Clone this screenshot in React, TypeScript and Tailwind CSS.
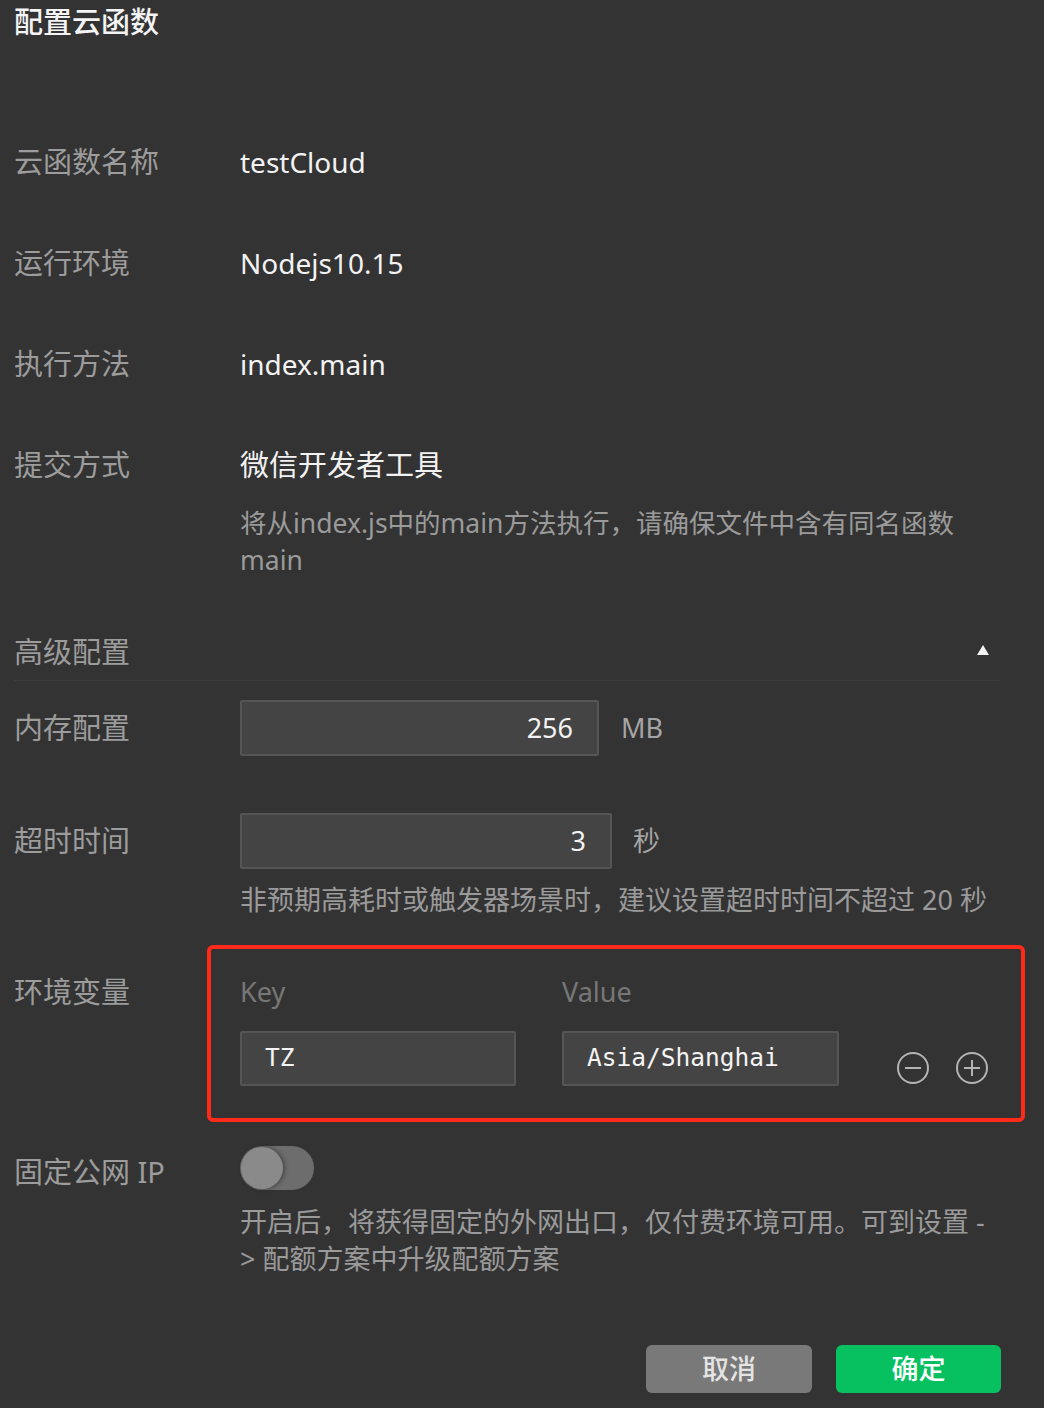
import React from 'react';

function Row({ label, children }: { label: string; children: React.ReactNode }) {
  return (
    <div className="flex items-center h-[101px]">
      <div className="w-[226px] text-[29px] text-[#9c9c9c]">{label}</div>
      <div className="text-[28px] text-[#f2f2f2]">{children}</div>
    </div>
  );
}

function CircleIcon({ plus }: { plus?: boolean }) {
  return (
    <svg width="34" height="34" viewBox="0 0 34 34" fill="none" stroke="#b4b4b4" strokeWidth="2">
      <circle cx="17" cy="17" r="15" />
      <line x1="9" y1="17" x2="25" y2="17" />
      {plus && <line x1="17" y1="9" x2="17" y2="25" />}
    </svg>
  );
}

export default function App() {
  return (
    <div className="w-[1044px] h-[1408px] bg-[#333333] pl-[14px] font-['Noto_Sans','Noto_Sans_CJK_SC',sans-serif] overflow-hidden">
      <div className="h-[44px] leading-[44px] text-[29px] font-medium text-[#f4f4f4]">配置云函数</div>
      <div className="h-[67px]" />

      <Row label="云函数名称">testCloud</Row>
      <Row label="运行环境">Nodejs10.15</Row>
      <Row label="执行方法">index.main</Row>

      {/* 提交方式 */}
      <div className="flex items-start mt-[29px]">
        <div className="w-[226px] h-[44px] leading-[44px] text-[29px] text-[#9c9c9c]">提交方式</div>
        <div>
          <div className="h-[44px] leading-[44px] text-[29px] text-[#f2f2f2]">微信开发者工具</div>
          <p className="mt-[18px] text-[26.5px] leading-[37px] text-[#9a9a9a]">
            将从index.js中的main方法执行，请确保文件中含有同名函数
            <br />
            main
          </p>
        </div>
      </div>

      {/* 高级配置 */}
      <div className="mt-[51px] w-[986px] h-[51px] flex items-start justify-between border-b border-[#3c3c3c]">
        <div className="h-[44px] leading-[44px] text-[29px] text-[#9c9c9c]">高级配置</div>
        <svg width="14" height="12" viewBox="0 0 14 12" className="mt-[14px] mr-[10px]">
          <polygon points="7,1 13,11 1,11" fill="#f4f4f4" />
        </svg>
      </div>

      <div className="flex items-center mt-[19px]">
        <div className="w-[226px] text-[29px] text-[#9c9c9c]">内存配置</div>
        <div className="w-[359px] h-[56px] bg-[#444444] border-2 border-[#555555] rounded-[2px] flex items-center justify-end pr-[24px] text-[27px] text-[#f2f2f2]">
          256
        </div>
        <div className="ml-[22px] text-[27px] text-[#a5a5a5]">MB</div>
      </div>

      <div className="flex items-start mt-[57px]">
        <div className="w-[226px] h-[56px] leading-[56px] text-[29px] text-[#9c9c9c]">超时时间</div>
        <div>
          <div className="flex items-center">
            <div className="w-[372px] h-[56px] bg-[#444444] border-2 border-[#555555] rounded-[2px] flex items-center justify-end pr-[24px] text-[27px] text-[#f2f2f2]">
              3
            </div>
            <div className="ml-[21px] text-[27px] text-[#a5a5a5]">秒</div>
          </div>
          <p className="mt-[12px] text-[27px] leading-[37px] text-[#9a9a9a]">
            非预期高耗时或触发器场景时，建议设置超时时间不超过 20 秒
          </p>
        </div>
      </div>

      {/* 环境变量 */}
      <div className="flex items-start mt-[27px]">
        <div className="w-[193px] pt-[25px] h-[44px] leading-[44px] text-[29px] text-[#9c9c9c] box-content">环境变量</div>
        <div className="w-[818px] h-[177px] border-4 border-[#ff2a1a] rounded-[6px] pl-[29px] pt-[21px]">
          <div className="flex h-[44px] leading-[44px] text-[27px] text-[#777777]">
            <div className="w-[322px]">Key</div>
            <div>Value</div>
          </div>
          <div className="flex items-center mt-[17px]">
            <div className="w-[276px] h-[55px] bg-[#444444] border-2 border-[#555555] rounded-[2px] flex items-center pl-[23px] font-['DejaVu_Sans_Mono',monospace] text-[24.5px] text-[#f4f4f4]">
              TZ
            </div>
            <div className="ml-[46px] w-[277px] h-[55px] bg-[#444444] border-2 border-[#555555] rounded-[2px] flex items-center pl-[23px] font-['DejaVu_Sans_Mono',monospace] text-[24.5px] text-[#f4f4f4]">
              Asia/Shanghai
            </div>
            <div className="ml-[57px] mt-[18px] flex gap-[25px]">
              <CircleIcon />
              <CircleIcon plus />
            </div>
          </div>
        </div>
      </div>

      {/* 固定公网 IP */}
      <div className="flex items-start mt-[24px]">
        <div className="w-[226px] pt-[4px] h-[44px] leading-[44px] text-[29px] text-[#9c9c9c] box-content">固定公网 IP</div>
        <div>
          <div className="w-[74px] h-[44px] rounded-full bg-[#6d6d6d] flex items-center pl-[1px]">
            <div className="w-[42px] h-[42px] rounded-full bg-[#8a8a8a] shadow-[2px_0_4px_rgba(0,0,0,0.35)]" />
          </div>
          <p className="mt-[13px] text-[27px] leading-[37px] text-[#9a9a9a]">
            开启后，将获得固定的外网出口，仅付费环境可用。可到设置 -
            <br />
            &gt; 配额方案中升级配额方案
          </p>
        </div>
      </div>

      {/* 按钮 */}
      <div className="flex justify-end gap-[24px] pr-[43px] mt-[68px]">
        <button className="w-[166px] h-[48px] rounded-[6px] bg-[#797979] text-[27px] font-medium text-[#e4e4e4]">
          取消
        </button>
        <button className="w-[165px] h-[48px] rounded-[6px] bg-[#07c160] text-[27px] font-medium text-white">
          确定
        </button>
      </div>
    </div>
  );
}
